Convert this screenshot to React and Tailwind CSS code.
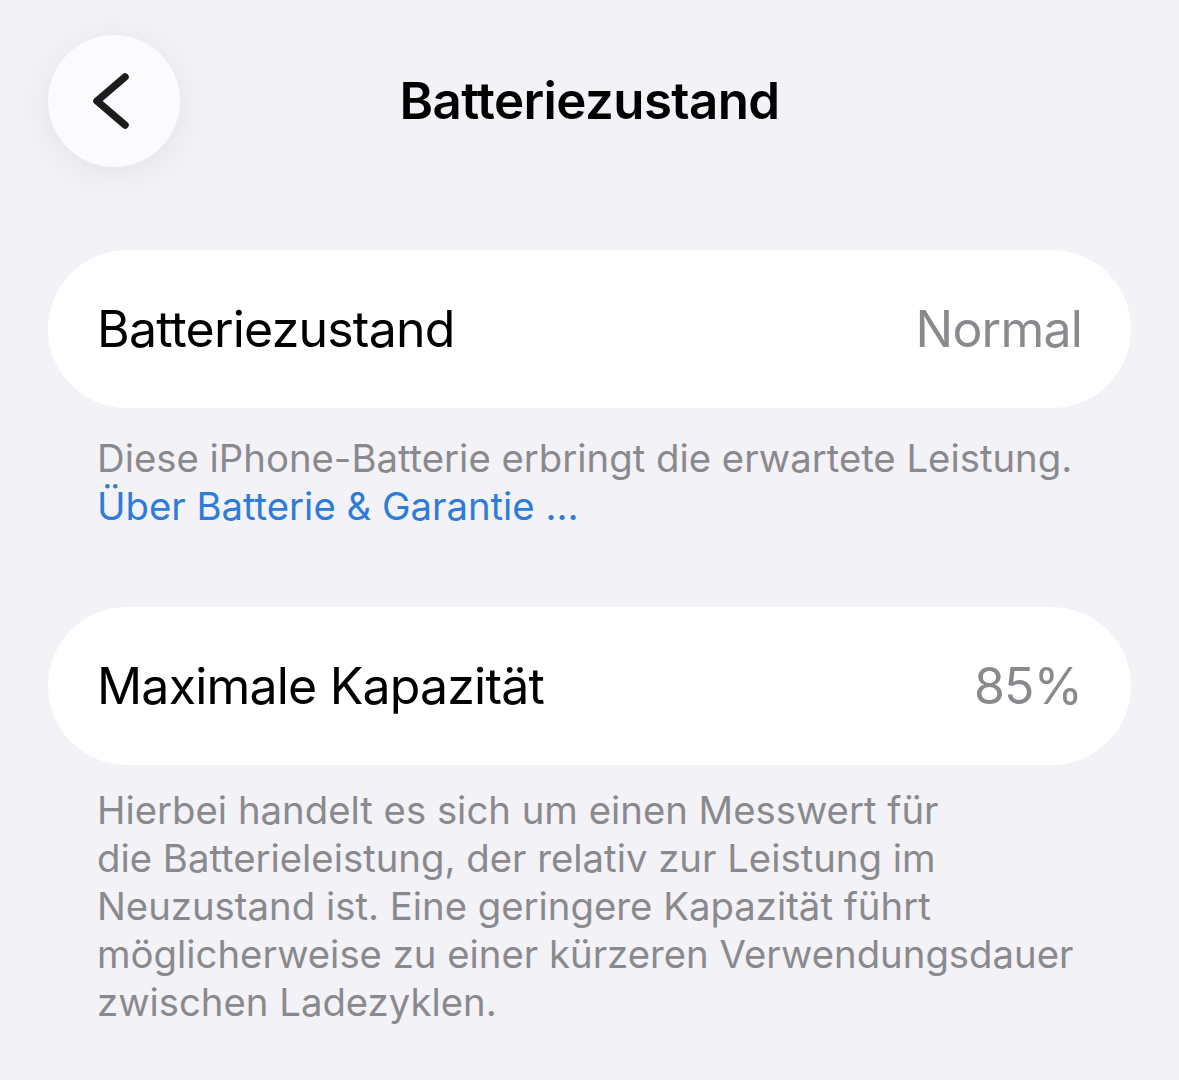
export default function App() {
  return (
    <div
      className="min-h-screen w-full bg-[#f2f2f7] px-[48px] pt-[35px]"
      style={{ fontFamily: "Inter, 'Noto Sans', sans-serif" }}
    >
      {/* header */}
      <div className="relative flex h-[132px] items-center justify-center">
        <button className="absolute left-0 top-0 flex h-[132px] w-[132px] items-center justify-center rounded-full bg-[#fbfbfd] shadow-[0_6px_40px_rgba(0,0,0,0.07)]">
          <svg className="mr-[4px]" width="40" height="60" viewBox="0 0 40 60" fill="none">
            <path
              d="M33 6 L5 30 L33 54"
              stroke="#1c1c1e"
              strokeWidth="7.5"
              strokeLinecap="round"
              strokeLinejoin="round"
            />
          </svg>
        </button>
        <h1 className="text-[51px] font-semibold tracking-[-0.6px] text-black">
          Batteriezustand
        </h1>
      </div>

      {/* Batteriezustand */}
      <div className="mt-[83px] flex h-[158px] items-center justify-between rounded-full bg-white px-[49px] text-[50px] tracking-[-0.8px]">
        <span className="text-black">Batteriezustand</span>
        <span className="text-[#8a8a8e]">Normal</span>
      </div>
      <div className="mt-[26px] px-[49px] text-[38.3px] leading-[48px] text-[#8a8a8e]">
        <p>Diese iPhone-Batterie erbringt die erwartete Leistung.</p>
        <p className="text-[#2f7bd8]">Über Batterie &amp; Garantie …</p>
      </div>

      {/* Maximale Kapazität */}
      <div className="mt-[77px] flex h-[158px] items-center justify-between rounded-full bg-white px-[49px] text-[50px] tracking-[-0.8px]">
        <span className="text-black">Maximale Kapazität</span>
        <span className="text-[#8a8a8e]">85%</span>
      </div>
      <div className="mt-[21px] px-[49px] text-[38.3px] leading-[48px] text-[#8a8a8e]">
        <p>
          Hierbei handelt es sich um einen Messwert für
          <br />
          die Batterieleistung, der relativ zur Leistung im
          <br />
          Neuzustand ist. Eine geringere Kapazität führt
          <br />
          möglicherweise zu einer kürzeren Verwendungsdauer
          <br />
          zwischen Ladezyklen.
        </p>
      </div>
    </div>
  );
}
